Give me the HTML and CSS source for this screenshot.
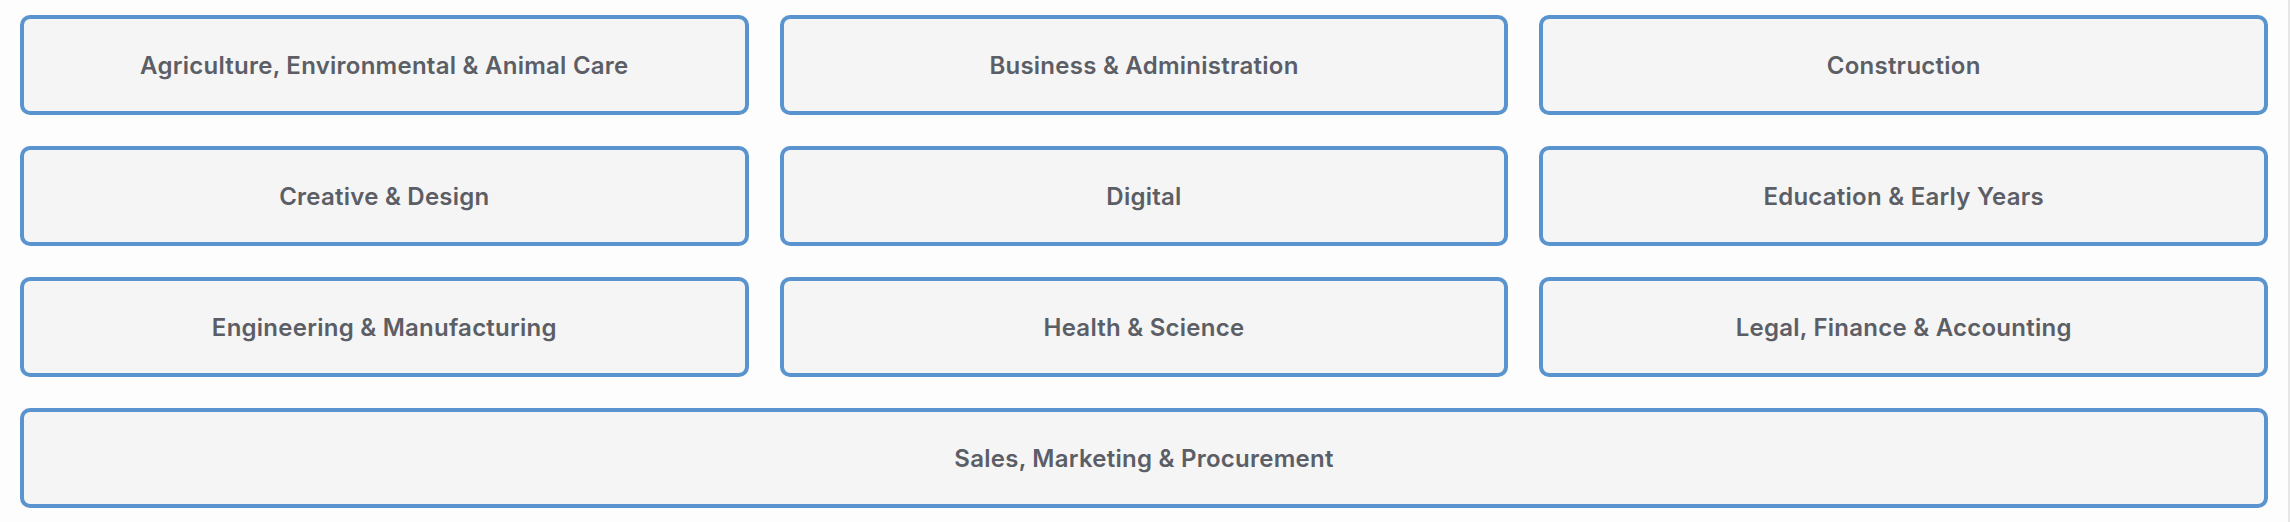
FILE: index.html
```html
<!DOCTYPE html>
<html lang="en">
<head>
<meta charset="utf-8">
<title>Sectors</title>
<link rel="stylesheet" href="styles.css">
</head>
<body>
<div class="page">
  <div class="grid">
    <button class="tile">Agriculture, Environmental &amp; Animal Care</button>
    <button class="tile">Business &amp; Administration</button>
    <button class="tile">Construction</button>
    <button class="tile">Creative &amp; Design</button>
    <button class="tile">Digital</button>
    <button class="tile">Education &amp; Early Years</button>
    <button class="tile">Engineering &amp; Manufacturing</button>
    <button class="tile">Health &amp; Science</button>
    <button class="tile">Legal, Finance &amp; Accounting</button>
    <button class="tile tile-wide">Sales, Marketing &amp; Procurement</button>
  </div>
</div>
</body>
</html>
```

FILE: styles.css
```css
html, body {
  margin: 0;
  padding: 0;
  background: #fdfdfd;
}

body {
  font-family: Inter, "Open Sans", "Liberation Sans", sans-serif;
}

.page {
  height: 522px;
  box-sizing: border-box;
  padding: 15px 20px 0 20px;
  border-right: 2px solid #e6e6e6;
}

.grid {
  display: grid;
  grid-template-columns: repeat(3, 1fr);
  grid-auto-rows: 100px;
  gap: 31px 31px;
}

.tile {
  box-sizing: border-box;
  height: 100px;
  margin: 0;
  padding: 0 12px;
  background: #f5f5f5;
  border: 4px solid #5a94cf;
  border-radius: 10px;
  color: #5c5e66;
  font-family: inherit;
  font-size: 24px;
  font-weight: 600;
  letter-spacing: 0.25px;
  text-align: center;
  cursor: pointer;
}

.tile-wide {
  grid-column: 1 / -1;
}
```
